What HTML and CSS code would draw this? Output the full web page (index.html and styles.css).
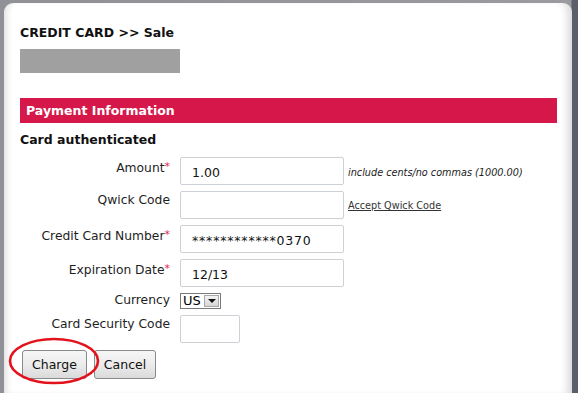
FILE: index.html
```html
<!DOCTYPE html>
<html>
<head>
    <title>Credit Card Sale</title>
    <link rel="stylesheet" href="styles.css">
</head>
<body>

<div class="dialog">
    <h2 class="title">CREDIT CARD &gt;&gt; Sale</h2>
    <div class="masked"></div>

    <div class="section-bar">Payment Information</div>
    <div class="status">Card authenticated</div>

    <div class="form-grid">
        <label for="amount">Amount<span class="req">*</span></label>
        <input type="text" id="amount" class="field" value="1.00">
        <span class="hint">include cents/no commas (1000.00)</span>

        <label for="qwick">Qwick Code</label>
        <input type="text" id="qwick" class="field" value="">
        <a class="hint-link" href="#">Accept Qwick Code</a>

        <label for="ccnum">Credit Card Number<span class="req">*</span></label>
        <input type="text" id="ccnum" class="field field-masked" value="************0370">
        <span></span>

        <label for="expdate">Expiration Date<span class="req">*</span></label>
        <input type="text" id="expdate" class="field" value="12/13">
        <span></span>

        <label class="label-tight">Currency</label>
        <div class="currency">
            <span class="currency-value">US</span>
            <span class="currency-btn"></span>
        </div>
        <span></span>

        <label for="cvv">Card Security Code</label>
        <input type="text" id="cvv" class="field field-short" value="">
        <span></span>
    </div>

    <div class="actions">
        <button class="btn">Charge</button>
        <button class="btn">Cancel</button>
        <svg class="circle-mark" width="94" height="50" viewBox="0 0 94 50">
            <ellipse cx="46" cy="24" rx="44" ry="22" fill="none" stroke="#e3131d" stroke-width="2.6"/>
        </svg>
    </div>
</div>

</body>
</html>
```

FILE: styles.css
```css
:root {
    --red-bar: #d5174a;
    --req: #e2264f;
    --text-color: #1e1e1e;
    --input-border: #cdd1d6;
}

html, body {
    margin: 0;
    height: 100%;
}

body {
    font-family: "DejaVu Sans", Verdana, sans-serif;
    color: var(--text-color);
    background: linear-gradient(to right, #8f9197 0, #9a9b9f 571px, #5b5f6a 572px);
    padding-top: 3px;
    box-sizing: border-box;
    overflow: hidden;
}

.dialog {
    background-color: #ffffff;
    margin: 0 6px 0 4px;
    height: 100%;
    border-radius: 9px 9px 0 0;
    padding: 22px 15px 0 16px;
    box-sizing: border-box;
    position: relative;
    box-shadow: inset -9px 0 8px -5px rgba(0, 0, 0, 0.16), inset 8px 0 7px -6px rgba(0, 0, 0, 0.14);
}

.title {
    font-size: 12.5px;
    font-weight: bold;
    margin: 0;
    line-height: 16px;
    color: #111;
}

.masked {
    width: 160px;
    height: 24px;
    background-color: #a0a0a0;
    margin-top: 8px;
}

.section-bar {
    background-color: var(--red-bar);
    color: #ffffff;
    font-weight: bold;
    font-size: 12.5px;
    height: 25px;
    line-height: 25px;
    padding-left: 6px;
    margin-top: 25px;
}

.status {
    font-weight: bold;
    font-size: 12.5px;
    line-height: 16px;
    margin-top: 9px;
    color: #111;
}

.form-grid {
    display: grid;
    grid-template-columns: 150px 164px 1fr;
    column-gap: 10px;
    row-gap: 6px;
    margin-top: 9px;
    align-items: start;
}

.form-grid label {
    text-align: right;
    font-size: 12.3px;
    line-height: 15px;
    padding-top: 2px;
    white-space: nowrap;
}

.form-grid .label-tight {
    padding-top: 0;
}

.req {
    color: var(--req);
    font-size: 11px;
    vertical-align: 2px;
}

.field {
    font-family: "DejaVu Sans", Verdana, sans-serif;
    font-size: 12.5px;
    width: 164px;
    height: 28px;
    box-sizing: border-box;
    border: 1px solid var(--input-border);
    border-radius: 2px;
    padding: 2px 11px 0;
    color: #111;
    outline: none;
}

.field-masked {
    letter-spacing: 0.8px;
}

.field-short {
    width: 60px;
}

.hint {
    font-style: italic;
    font-size: 9.7px;
    padding-top: 10px;
    margin-left: -6px;
    color: #222;
    white-space: nowrap;
}

.hint-link {
    font-size: 9.7px;
    color: #333;
    padding-top: 9px;
    margin-left: -6px;
    white-space: nowrap;
}

.currency {
    display: flex;
    align-items: center;
    width: 41px;
    height: 16px;
    box-sizing: border-box;
    border: 1px solid #7a7a7a;
    background: #fff;
}

.currency-value {
    flex: 1;
    font-size: 13px;
    line-height: 14px;
    padding-left: 2px;
    color: #000;
}

.currency-btn {
    width: 15px;
    height: 12px;
    margin-right: 1px;
    border: 1px solid #a8a8a8;
    box-sizing: border-box;
    background: linear-gradient(#f4f4f4, #d6d6d6);
    position: relative;
}

.currency-btn::after {
    content: "";
    position: absolute;
    left: 3px;
    top: 3px;
    border-left: 4px solid transparent;
    border-right: 4px solid transparent;
    border-top: 4px solid #111;
}

.actions {
    display: flex;
    gap: 7px;
    margin-top: 7px;
    padding-left: 2px;
    position: relative;
}

.btn {
    font-family: "DejaVu Sans", Verdana, sans-serif;
    font-size: 12.5px;
    color: #111;
    height: 29px;
    padding: 0 9px;
    border: 1px solid #8a8a8a;
    border-radius: 3px;
    background: linear-gradient(#f6f6f6 0, #ececec 50%, #dadada 100%);
    cursor: pointer;
}

.circle-mark {
    position: absolute;
    left: -12px;
    top: -13px;
    pointer-events: none;
}
```
